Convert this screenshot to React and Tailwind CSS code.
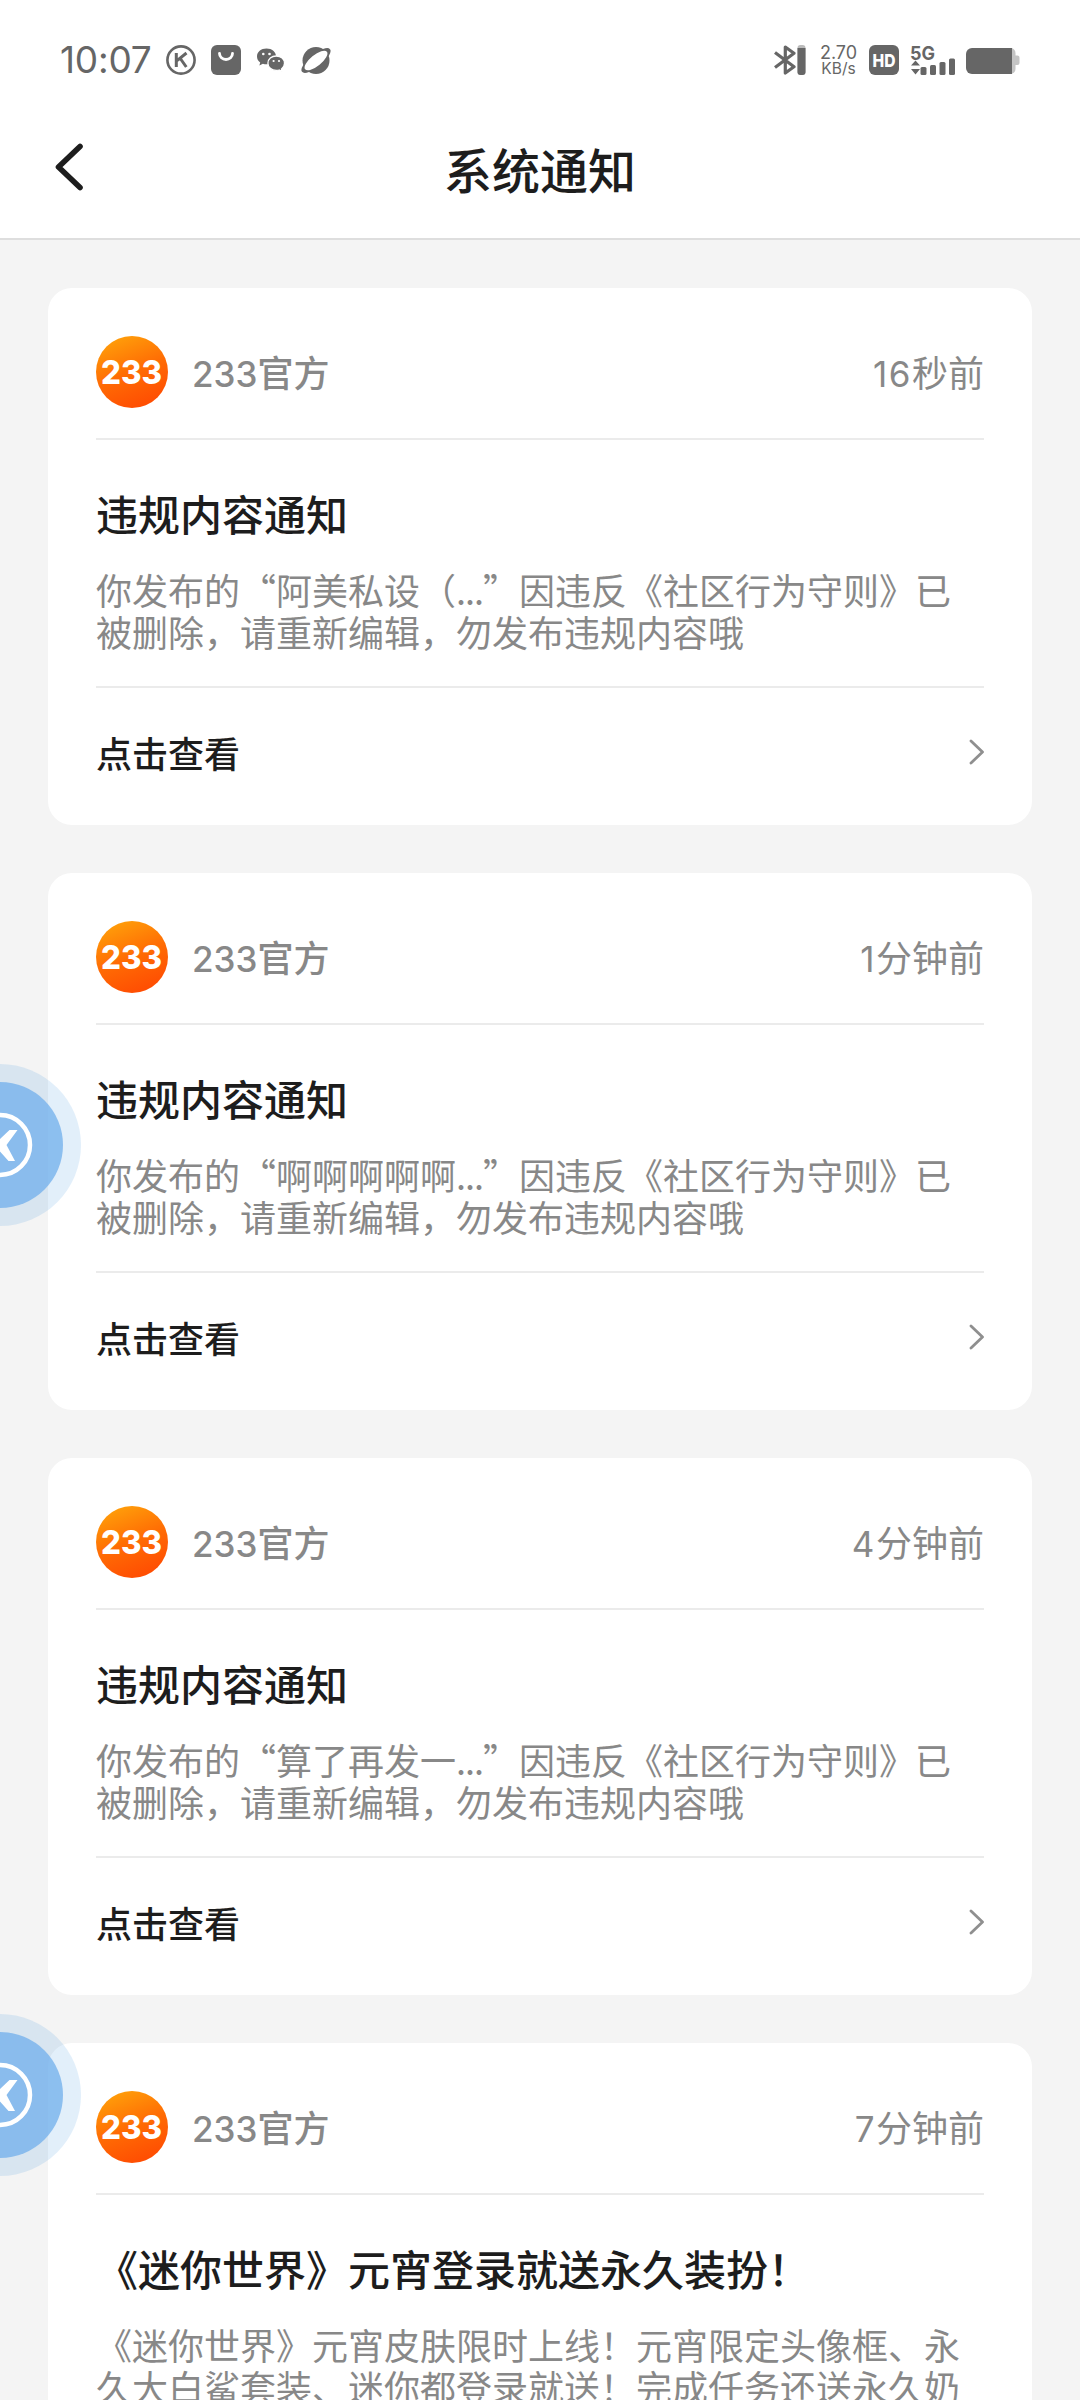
const notices = [
  {
    id: 1,
    amount: "16",
    unit: "秒前",
    title: "违规内容通知",
    before: "你发布的“阿美私设（",
    after: "”因违反《社区行为守则》已",
    rest: "被删除，请重新编辑，勿发布违规内容哦",
  },
  {
    id: 2,
    amount: "1",
    unit: "分钟前",
    title: "违规内容通知",
    before: "你发布的“啊啊啊啊啊",
    after: "”因违反《社区行为守则》已",
    rest: "被删除，请重新编辑，勿发布违规内容哦",
  },
  {
    id: 3,
    amount: "4",
    unit: "分钟前",
    title: "违规内容通知",
    before: "你发布的“算了再发一",
    after: "”因违反《社区行为守则》已",
    rest: "被删除，请重新编辑，勿发布违规内容哦",
  },
  {
    id: 4,
    amount: "7",
    unit: "分钟前",
    title: "《迷你世界》元宵登录就送永久装扮！",
    before: "《迷你世界》元宵皮肤限时上线！元宵限定头像框、永",
    rest: "久大白鲨套装、迷你都登录就送！完成任务还送永久奶",
  },
];

function StatusBar() {
  return (
    <div className="h-[120px] flex items-center justify-between pl-[60px] pr-[60px] text-[#666]">
      <div className="flex items-center">
        <span className="w-[106px] font-['Inter',sans-serif] text-[37px] leading-[46px] tracking-[-0.2px] whitespace-nowrap">10:07</span>
        <svg width="30" height="30" viewBox="0 0 30 30" fill="none" stroke="currentColor">
          <circle cx="15" cy="15" r="13.6" strokeWidth="2.6" />
          <path d="M10.3 8v14M20.5 8l-9.5 7.6M14.3 13.5l6 8.5" strokeWidth="3" />
        </svg>
        <svg className="ml-[15px]" width="30" height="30" viewBox="0 0 30 30">
          <rect width="30" height="30" rx="6" fill="currentColor" />
          <path d="M8.5 8.5a6.5 6 0 0 0 13 0" fill="none" stroke="white" strokeWidth="2.8" strokeLinecap="round" />
        </svg>
        <svg className="ml-[15px]" width="30" height="30" viewBox="0 0 30 30">
          <path d="M10.5 3.5C5 3.5 1 7 1 11.5c0 2.5 1.2 4.5 3.2 6l-.8 3 3.5-1.7c1.2.4 2.4.5 3.6.5 5.5 0 9.5-3.5 9.5-7.9S16 3.5 10.5 3.5z" fill="currentColor" />
          <path d="M20.3 11c-4.8 0-8.4 3.2-8.4 7.2s3.6 7.2 8.4 7.2c1 0 2-.1 3-.4l2.9 1.5-.7-2.6c1.9-1.4 3-3.4 3-5.700 0-4-3.500-7.200-8.200-7.200z" fill="currentColor" stroke="white" strokeWidth="1.3" />
          <g fill="white">
            <circle cx="7.3" cy="9" r="1.3" />
            <circle cx="13.5" cy="9" r="1.3" />
            <circle cx="17.6" cy="16" r="1.1" />
            <circle cx="23" cy="16" r="1.1" />
          </g>
        </svg>
        <svg className="ml-[14px]" width="32" height="30" viewBox="0 0 32 30">
          <circle cx="16" cy="15.5" r="13.5" fill="currentColor" />
          <ellipse cx="16" cy="15.5" rx="18" ry="6.5" transform="rotate(-39 16 15.5)" fill="currentColor" />
          <ellipse cx="16" cy="15.5" rx="14" ry="5.6" transform="rotate(-39 16 15.5)" fill="white" />
        </svg>
      </div>

      <div className="flex items-center">
        <svg width="32" height="30" viewBox="0 0 32 30">
          <path d="M1 7.5l19 14.3-8.7 6.2V2l8.7 6.2L1 22.5" fill="none" stroke="currentColor" strokeWidth="3.2" strokeLinejoin="round" />
          <rect x="23.5" width="8" height="30" rx="3" fill="#bbb" />
          <path d="M23.5 3h8v24a3 3 0 0 1-3 3h-2a3 3 0 0 1-3-3z" fill="currentColor" />
        </svg>
        <div className="ml-[13px] w-[39px] flex flex-col items-center font-['Inter',sans-serif] whitespace-nowrap">
          <span className="text-[18px] leading-[17px]">2.70</span>
          <span className="text-[15.5px] leading-[16px]">KB/s</span>
        </div>
        <svg className="ml-[11px]" width="30" height="30" viewBox="0 0 30 30">
          <rect width="30" height="30" rx="6" fill="currentColor" />
          <text x="3.5" y="21.5" textLength="23" lengthAdjust="spacingAndGlyphs" className="font-['Inter',sans-serif] text-[18px] font-extrabold" fill="white">HD</text>
        </svg>
        <svg className="ml-[12px]" width="45" height="30" viewBox="0 0 45 30" fill="currentColor" overflow="visible">
          <text x="-1" y="14.5" textLength="25" lengthAdjust="spacingAndGlyphs" className="font-['Inter',sans-serif] text-[19px] font-bold">5G</text>
          <path d="M0 20.5l4.5-5 4.5 5zM0 24l4.5 5.5L9 24z" />
          <rect x="9.5" y="22" width="6" height="8" rx="1.5" />
          <rect x="19" y="20" width="6" height="10" rx="1.5" />
          <rect x="28.5" y="17" width="6" height="13" rx="1.5" />
          <rect x="38" y="13.5" width="6" height="16.5" rx="1.5" />
        </svg>
        <svg className="ml-[10px]" width="54" height="30" viewBox="0 0 54 30">
          <path d="M40 3h4.5a5 5 0 0 1 5 5v2.5h2a2 2 0 0 1 2 2v5.5a2 2 0 0 1-2 2h-2V24a5 5 0 0 1-5 5H40z" fill="#c4c4c4" />
          <path d="M6 3h40v26H6a6 6 0 0 1-6-6V9a6 6 0 0 1 6-6z" fill="currentColor" />
        </svg>
      </div>
    </div>
  );
}

function Header() {
  return (
    <div className="h-[118px] grid grid-cols-[1fr_auto_1fr] items-center text-[#1d1d1d]">
      <svg className="ml-[53px] mb-[24px]" width="32" height="50" viewBox="0 0 32 50" fill="none" stroke="currentColor" strokeWidth="5.6" strokeLinecap="round" strokeLinejoin="round">
        <path d="M27 4.5L5.5 25 27 45.5" />
      </svg>
      <h1 className="text-[48px] font-medium leading-[60px] mb-[23px]">系统通知</h1>
    </div>
  );
}

function Avatar() {
  return (
    <svg width="72" height="72" viewBox="0 0 72 72">
      <defs>
        <linearGradient id="orange" x1="0.2" y1="0" x2="0.6" y2="1">
          <stop offset="0" stopColor="#ffa20a" />
          <stop offset="0.55" stopColor="#ff6a04" />
          <stop offset="1" stopColor="#ff4d02" />
        </linearGradient>
      </defs>
      <circle cx="36" cy="36" r="36" fill="url(#orange)" />
      <text x="5" y="48" textLength="61" lengthAdjust="spacingAndGlyphs" className="font-['Inter',sans-serif] text-[33px] font-extrabold" fill="white">233</text>
    </svg>
  );
}

function NoticeCard({ notice }) {
  return (
    <div className="h-[537px] shrink-0 bg-white rounded-3xl px-[48px]">
      <div className="h-[152px] border-b-2 border-[#ebebeb] flex items-start pt-[48px] text-[#888]">
        <Avatar />
        <div className="ml-[24px] mt-[11px] text-[36px] leading-[48px] font-medium">
          <span className="font-['Inter',sans-serif] text-[35px]">233</span>官方
        </div>
        <div className="ml-auto mt-[11px] text-[36px] leading-[48px]">
          <span className="font-['Inter',sans-serif] text-[35px] tracking-[1.5px]">{notice.amount}</span>{notice.unit}
        </div>
      </div>

      <div className="h-[248px] border-b-2 border-[#ebebeb] pt-[48px]">
        <h2 className="text-[42px] leading-[50px] font-medium text-[#1d1d1d] whitespace-nowrap">{notice.title}</h2>
        <p className="mt-[30px] text-[36px] leading-[42.4px] text-[#888] whitespace-nowrap">
          {notice.before}
          {notice.after && <span className="tracking-[-1px]">...</span>}
          {notice.after}
          <br />
          {notice.rest}
        </p>
      </div>

      <div className="h-[134px] flex items-center justify-between text-[#1d1d1d]">
        <span className="-mt-[6px] text-[36px] leading-[48px] font-medium">点击查看</span>
        <svg className="-mt-[7px]" width="16" height="28" viewBox="0 0 16 28" fill="none" stroke="#8f8f8f" strokeWidth="2.8" strokeLinecap="round" strokeLinejoin="round">
          <path d="M3 3l11.5 11L3 25" />
        </svg>
      </div>
    </div>
  );
}

function FloatingBall({ className }) {
  return (
    <svg className={className} width="81" height="162" viewBox="0 -81 81 162">
      <circle r="81" fill="#4a9be0" fillOpacity="0.16" />
      <circle r="63" fill="#72b0ec" fillOpacity="0.77" />
      <circle r="30" fill="none" stroke="white" strokeWidth="4.5" />
      <path d="M9.500 -15H17.5L6.5 0L15 16H8.5L0 6.5V-6Z" fill="white" />
    </svg>
  );
}

function App() {
  return (
    <div lang="zh-CN" className="relative w-[1080px] h-[2400px] overflow-hidden bg-[#f4f4f4] font-['Noto_Sans_CJK_SC',sans-serif]">
      <div className="h-[240px] bg-white border-b-2 border-[#dedede]">
        <StatusBar />
        <Header />
      </div>

      <div className="flex flex-col gap-[48px] px-[48px] pt-[48px]">
        {notices.map((notice) => (
          <NoticeCard key={notice.id} notice={notice} />
        ))}
      </div>

      <FloatingBall className="absolute left-0 top-[1064px]" />
      <FloatingBall className="absolute left-0 top-[2014px]" />
    </div>
  );
}

export default App;
